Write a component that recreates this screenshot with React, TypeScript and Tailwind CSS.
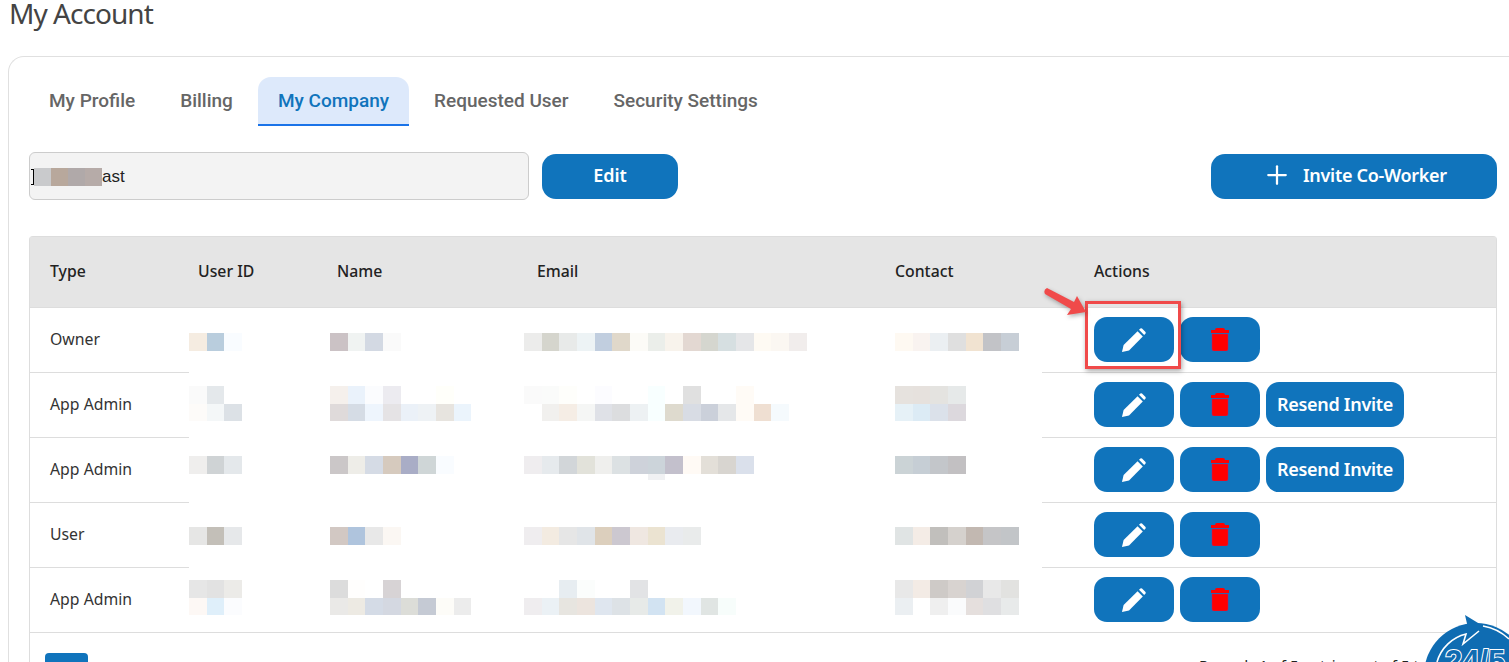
import { Plus } from "lucide-react";

const blue = "bg-[#1074bc]";
type Px = string[][];

function Blur({ rows }: { rows: Px }) {
  return (
    <div className="flex flex-col">
      {rows.map((r, i) => (
        <div key={i} className="flex h-[17.5px]">
          {r.map((c, j) => (
            <div key={j} className="w-[17.67px] h-full" style={{ background: c }} />
          ))}
        </div>
      ))}
    </div>
  );
}

function PencilIcon() {
  return (
    <svg width="24" height="24" viewBox="0 0 24 24" fill="#fff">
      <path d="M0 24 L1.6 17 L15.6 3.2 L20.8 8.4 L7 22.4 Z" />
      <path d="M17 1.8 L18.4 0.5 Q19.2 0 20 0.5 L23.5 4 Q24 4.8 23.5 5.5 L22.2 7 Z" />
    </svg>
  );
}

function TrashIcon() {
  return (
    <svg width="18" height="23" viewBox="0 0 18 23">
      <path d="M4 2 Q4 0 6 0 H12 Q14 0 14 2 H18 V5 H0 V2 Z" fill="#f00" />
      <path d="M1 6 H17 V21 Q17 23 15 23 H3 Q1 23 1 21 Z" fill="#f00" stroke="#b3206f" strokeWidth="0.5" />
    </svg>
  );
}

function ActionBtn({ children, wide }: { children: React.ReactNode; wide?: boolean }) {
  return (
    <button className={`${blue} ${wide ? "w-[138px]" : "w-[80px]"} h-[45px] rounded-[13px] flex items-center justify-center text-white text-[18px] font-semibold tracking-[-0.3px]`}>
      {children}
    </button>
  );
}

const rows: {
  type: string;
  pt: string;
  id: Px;
  name: Px;
  email: Px;
  contact: Px;
  resend?: boolean;
}[] = [
  {
    type: "Owner",
    pt: "pt-[25px]",
    id: [["#f5ece1", "#b9cddd", "#f9fcff"]],
    name: [["#cbc2c5", "#f0f3f2", "#d3d9e3", "#fafafa"]],
    email: [["#ececeb", "#d5d5cd", "#e8eae9", "#edf3f5", "#c1cedf", "#e0d8ca", "#fcfbf7", "#ebeeea", "#f8f3ec", "#e3d8d2", "#d5d6cf", "#d6dfe1", "#e5e6e8", "#fefaf3", "#fbf7f2", "#f1edec"]],
    contact: [["#fef9f2", "#f9f3f0", "#ebeff2", "#dfdfdf", "#f1e3d1", "#c2c3c7", "#c7ced6"]],
  },
  {
    type: "App Admin",
    pt: "pt-[13px]",
    resend: true,
    id: [["#fafafa", "#e4e8eb", "#fff"], ["#fdfbf9", "#f4f7f8", "#dce1e6"]],
    name: [
      ["#f5f0ec", "#eaf2fb", "#fbfcfe", "#ecebf0", "#fff", "#fff", "#fffffa", "#fff"],
      ["#dfdada", "#d5dce5", "#eef5fd", "#e5e3e5", "#ebf1f8", "#eef2f5", "#e7e4df", "#ebf4fc"],
    ],
    email: [
      ["#fafafa", "#fafbfa", "#fefefb", "#fff", "#fcfcff", "#fff", "#fff", "#f8ffff", "#fff", "#e0e0e0", "#fff", "#fff", "#fffbf6", "#fff", "#fff"],
      ["#fff", "#f1f0ee", "#f5ede5", "#f5f6f5", "#dfe1e7", "#dcdddf", "#edf1f3", "#f8ffff", "#dedace", "#d8dce4", "#cbd0da", "#e5e7e9", "#fffbf6", "#efdfd2", "#f5fafd"],
    ],
    contact: [["#e6e2de", "#e6e1dd", "#e4e3e0", "#e6e9e9"], ["#e6f1f7", "#dcebf5", "#dbe1ea", "#dcd8dd"]],
  },
  {
    type: "App Admin",
    pt: "pt-[18px]",
    resend: true,
    id: [["#efeeed", "#cfd3d5", "#e4e8eb"]],
    name: [["#cbc7c8", "#eeede8", "#d5dbe5", "#d6cabe", "#a9adc6", "#cfd6d7", "#f9fcff"]],
    email: [["#efedef", "#e6eaed", "#d2d6d9", "#e2e2da", "#efefed", "#dce1e3", "#ced2da", "#ccd4da", "#c3c0cc", "#fffaf5", "#e3dfd8", "#d8d5d0", "#dae0eb"]],
    contact: [["#cbd3d6", "#c6ced5", "#c3c6ca", "#c2c0c2"]],
  },
  {
    type: "User",
    pt: "pt-[24px]",
    id: [["#e6e6e5", "#c3bfb8", "#e6e8ea"]],
    name: [["#d2c8c3", "#afc4dd", "#e8e8e8", "#fbf7f3"]],
    email: [["#efedef", "#f3ebe1", "#e6e6e6", "#e0e4e8", "#dccfbd", "#ccc8d0", "#efe7e1", "#ebe3d1", "#e9ebef", "#e9ebeb"]],
    contact: [["#e0e4e4", "#f4ece6", "#c1bfbc", "#d5d1cd", "#c2b8b1", "#c5c5c7", "#c2c5c8"]],
  },
  {
    type: "App Admin",
    pt: "pt-[12px]",
    id: [["#e6e6e6", "#e2e2e2", "#ecebe8"], ["#fdf8f5", "#dfeffa", "#fbfcfe"]],
    name: [
      ["#dcdcdc", "#fffefd", "#fff", "#d7d3d5"],
      ["#eae9e7", "#edeae3", "#d4dbe6", "#d4d8e1", "#dcddd8", "#c5cad4", "#fdfcf8", "#ececec"],
    ],
    email: [
      ["#fff", "#fff", "#e7edf1", "#fbfdfc", "#fff", "#fff", "#e2e3e5"],
      ["#efedef", "#ebf1f5", "#e7e5e0", "#ece4de", "#dfe6ef", "#dde2e6", "#e7eae8", "#d2e3f2", "#f1f2ea", "#f2f7fd", "#e0e5e3", "#f7fdfb"],
    ],
    contact: [
      ["#e8e8e8", "#f3ebe5", "#cecac7", "#d8d3d0", "#d1d2d5", "#e8e8e8", "#e2e2e0"],
      ["#ebeff2", "#fff", "#efefef", "#fafbfc", "#e5dfdd", "#dfdfe1", "#e8eaea"],
    ],
  },
];

const tabs = ["My Profile", "Billing", "My Company", "Requested User", "Security Settings"];

export default function App() {
  return (
    <div className="relative h-[662px] w-[1509px] overflow-hidden bg-white font-['Noto_Sans',sans-serif] text-[#333]">
      <div className="h-[56px]">
        <h1 className="pl-[9px] text-[28px] leading-[26px] text-[#444] tracking-[-0.95px]">My Account</h1>
      </div>

      <div className="ml-[8px] border border-r-0 border-[#e0e0e0] rounded-l-[16px] pl-[20px] pr-[12px] pt-[20px] h-[700px]">
        {/* tabs */}
        <div className="flex gap-[5px] font-['Roboto',sans-serif] text-[19px] font-medium text-[#666]">
          {tabs.map((t) => (
            <div
              key={t}
              className={
                t === "My Company"
                  ? "h-[49px] px-[20px] pt-[2px] flex items-center rounded-t-[13px] bg-[#dde9fb] text-[#1074bc] border-b-2 border-[#1a73e8]"
                  : "h-[49px] px-[20px] pb-[1px] flex items-center"
              }
            >
              {t}
            </div>
          ))}
        </div>

        {/* company row */}
        <div className="flex items-center mt-[26px] h-[48px]">
          <div className="w-[500px] h-[48px] pt-[1px] rounded-[6px] border border-[#ccc] bg-[#f3f3f3] flex items-center font-['Liberation_Sans',sans-serif] text-[17px] text-[#222]">
            <span className="w-[3px] h-[16px] border border-l-0 border-black ml-[1px]" />
            <div className="flex h-[18px]">
              <div className="w-[17px] bg-[#c9cacc]" />
              <div className="w-[17px] bg-[#b8a89c]" />
              <div className="w-[17px] bg-[#b0a9a9]" />
              <div className="w-[17px] bg-[#b6aba8]" />
            </div>
            ast
          </div>
          <button className={`${blue} ml-[13px] w-[136px] h-[45px] pb-[2px] rounded-[14px] text-white text-[18px] font-semibold`}>Edit</button>
          <button className={`${blue} ml-auto w-[286px] h-[45px] pb-[2px] pl-[51px] rounded-[14px] text-white text-[18px] font-semibold tracking-[-0.3px] flex items-center gap-[11px]`}>
            <Plus size={30} strokeWidth={1.8} />
            Invite Co-Worker
          </button>
        </div>

        {/* table */}
        <div className="mt-[36px] border border-b-0 border-[#ddd] rounded-t-[4px] h-[500px] text-[15.8px] text-[#333]">
          <div className="flex items-center h-[71px] bg-[#e5e5e5] border-b border-[#ddd] font-medium text-[#222]">
            <div className="w-[168px] pl-[20px]">Type</div>
            <div className="w-[139px]">User ID</div>
            <div className="w-[200px]">Name</div>
            <div className="w-[358px]">Email</div>
            <div className="w-[199px]">Contact</div>
            <div>Actions</div>
          </div>
          {rows.map((r, i) => (
            <div key={i} className="flex h-[65px]">
              <div className="w-[159px] pl-[20px] pb-[1px] flex items-center border-b border-[#ddd]">{r.type}</div>
              <div className={`w-[853px] flex ${r.pt} ${i === rows.length - 1 ? "border-b border-[#ddd]" : ""}`}>
                <div className="w-[141px]"><Blur rows={r.id} /></div>
                <div className="w-[194px]"><Blur rows={r.name} /></div>
                <div className="w-[371px] relative">
                  <Blur rows={r.email} />
                  {i === 2 && <div className="absolute left-[124px] top-[18px] w-[17px] h-[6px] bg-[#f0f1f3]" />}
                </div>
                <div><Blur rows={r.contact} /></div>
              </div>
              <div className="flex-1 border-b border-[#ddd] flex gap-[6px] pl-[52px] pt-[9px]">
                <ActionBtn><PencilIcon /></ActionBtn>
                <ActionBtn><TrashIcon /></ActionBtn>
                {r.resend && <ActionBtn wide>Resend Invite</ActionBtn>}
              </div>
            </div>
          ))}
          <div className="flex pl-[15px] pt-[20px]">
            <div className={`${blue} w-[43px] h-[30px] rounded-[4px]`} />
            <div className="absolute left-[1199px] top-[655px] text-[15px] leading-[20px] text-[#222]">Records 1 of 5 entries out of 5 total</div>
          </div>
        </div>
      </div>

      {/* highlight callout on the first edit button */}
      <div className="absolute left-[1085px] top-[301px] w-[96px] h-[68px] border-[3px] border-[#f04a4a] shadow-[1px_2px_5px_rgba(0,0,0,0.35)]" />
      <svg className="absolute left-[1040px] top-[284px] drop-shadow-[1px_2px_2px_rgba(0,0,0,0.3)]" width="50" height="36" viewBox="0 0 50 36">
        <path d="M7 4 L34 18 L37 12 L46 28 L27 31 L31 25 L5 10 Q3 6 7 4 Z" fill="#f04a4a" />
      </svg>

      {/* 24/5 badge */}
      <svg className="absolute left-[1420px] top-[612px]" width="89" height="50" viewBox="0 0 89 50">
        <circle cx="56" cy="63" r="52" fill="#0f6cb2" />
        <path d="M45 3 L63 14 L46 25 L48 16 Z" fill="#0f6cb2" />
        <path d="M17 50 A40 40 0 0 1 46 22 L43 32 L59 19" fill="none" stroke="#fff" strokeWidth="1.6" />
        <path d="M63 14 A50 50 0 0 1 89 27" fill="none" stroke="#fff" strokeWidth="1.6" />
        <text x="25" y="60" fontSize="31" fontWeight="700" fill="#0f6cb2" stroke="#fff" strokeWidth="2" paintOrder="stroke" fontFamily="Liberation Sans, sans-serif">24/5</text>
      </svg>
    </div>
  );
}
